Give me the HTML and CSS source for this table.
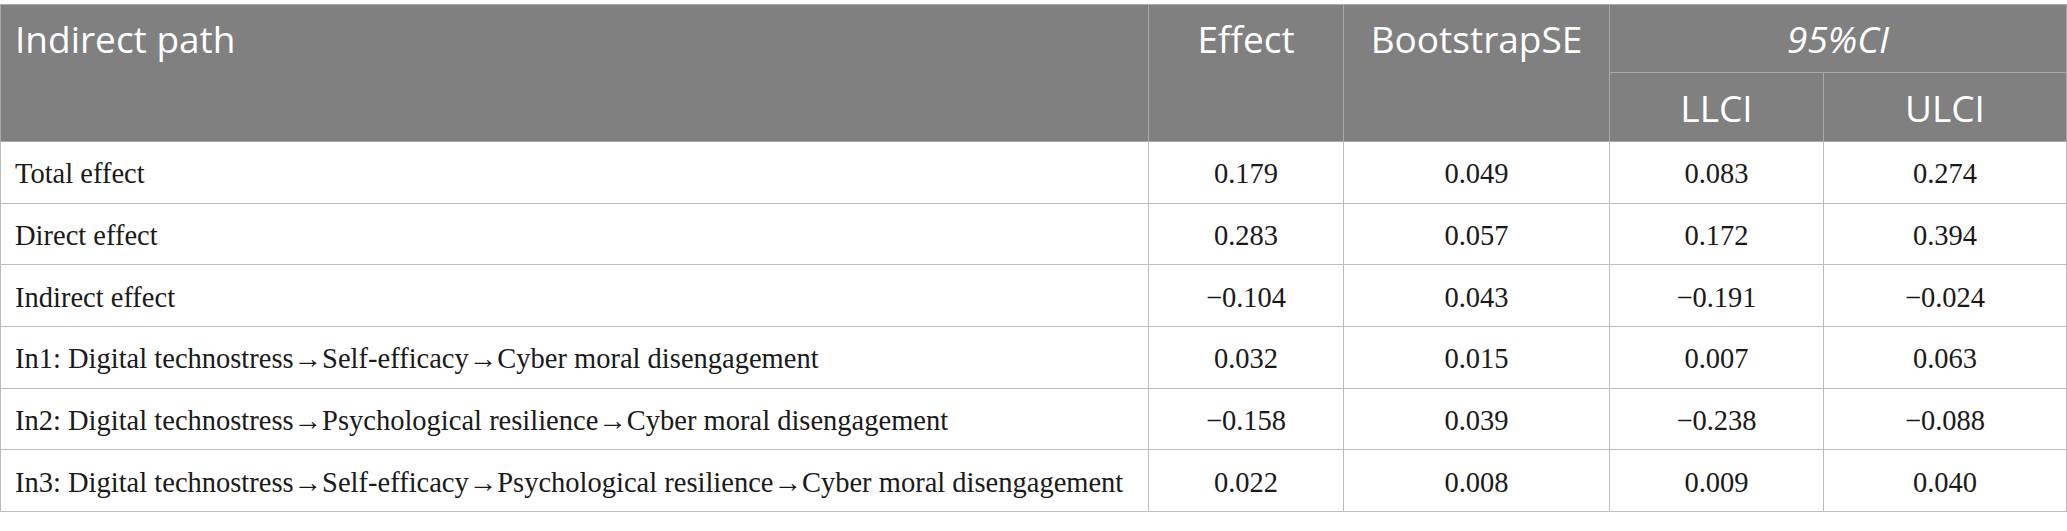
FILE: index.html
```html
<!DOCTYPE html>
<html>
<head>
<meta charset="utf-8">
<link rel="stylesheet" href="styles.css">
</head>
<body>
<div class="wrap">
<table class="results">
  <colgroup>
    <col class="c-path">
    <col class="c-effect">
    <col class="c-se">
    <col class="c-ll">
    <col class="c-ul">
  </colgroup>
  <thead>
    <tr class="h1">
      <th rowspan="2" class="left">Indirect path</th>
      <th rowspan="2">Effect</th>
      <th rowspan="2">BootstrapSE</th>
      <th colspan="2"><em>95%CI</em></th>
    </tr>
    <tr class="h2">
      <th>LLCI</th>
      <th>ULCI</th>
    </tr>
  </thead>
  <tbody>
    <tr><td class="left">Total effect</td><td>0.179</td><td>0.049</td><td>0.083</td><td>0.274</td></tr>
    <tr><td class="left">Direct effect</td><td>0.283</td><td>0.057</td><td>0.172</td><td>0.394</td></tr>
    <tr><td class="left">Indirect effect</td><td>−0.104</td><td>0.043</td><td>−0.191</td><td>−0.024</td></tr>
    <tr><td class="left">In1: Digital technostress→Self-efficacy→Cyber moral disengagement</td><td>0.032</td><td>0.015</td><td>0.007</td><td>0.063</td></tr>
    <tr><td class="left">In2: Digital technostress→Psychological resilience→Cyber moral disengagement</td><td>−0.158</td><td>0.039</td><td>−0.238</td><td>−0.088</td></tr>
    <tr><td class="left">In3: Digital technostress→Self-efficacy→Psychological resilience→Cyber moral disengagement</td><td>0.022</td><td>0.008</td><td>0.009</td><td>0.040</td></tr>
  </tbody>
</table>
</div>
</body>
</html>
```

FILE: styles.css
```css
html, body {
  margin: 0;
  padding: 0;
  background: #ffffff;
}

.wrap {
  padding-top: 4px;
}

.results {
  border-collapse: collapse;
  table-layout: fixed;
  width: 2067px;
}

.c-path { width: 1148px; }
.c-effect { width: 195px; }
.c-se { width: 266px; }
.c-ll { width: 214px; }
.c-ul { width: 243px; }

.results th {
  background: #808080;
  color: #ffffff;
  font-family: "Open Sans", "Noto Sans", sans-serif;
  font-weight: 400;
  font-size: 37px;
  line-height: 50px;
  text-align: center;
  vertical-align: top;
  border: 1px solid #a8a8a8;
  padding: 0 14px;
  white-space: nowrap;
}

.results th em {
  font-style: italic;
}

.results .h1 th {
  height: 58px;
  padding-top: 9px;
}

.results .h2 th {
  height: 58px;
  padding-top: 10px;
}

.results td {
  font-family: "Liberation Serif", "Times New Roman", serif;
  font-size: 28.5px;
  line-height: 32px;
  color: #1a1a1a;
  text-align: center;
  border: 1px solid #bdbdbd;
  height: 56.7px;
  padding: 4px 14px 0 14px;
  white-space: nowrap;
}

.results .left {
  text-align: left;
}
```
